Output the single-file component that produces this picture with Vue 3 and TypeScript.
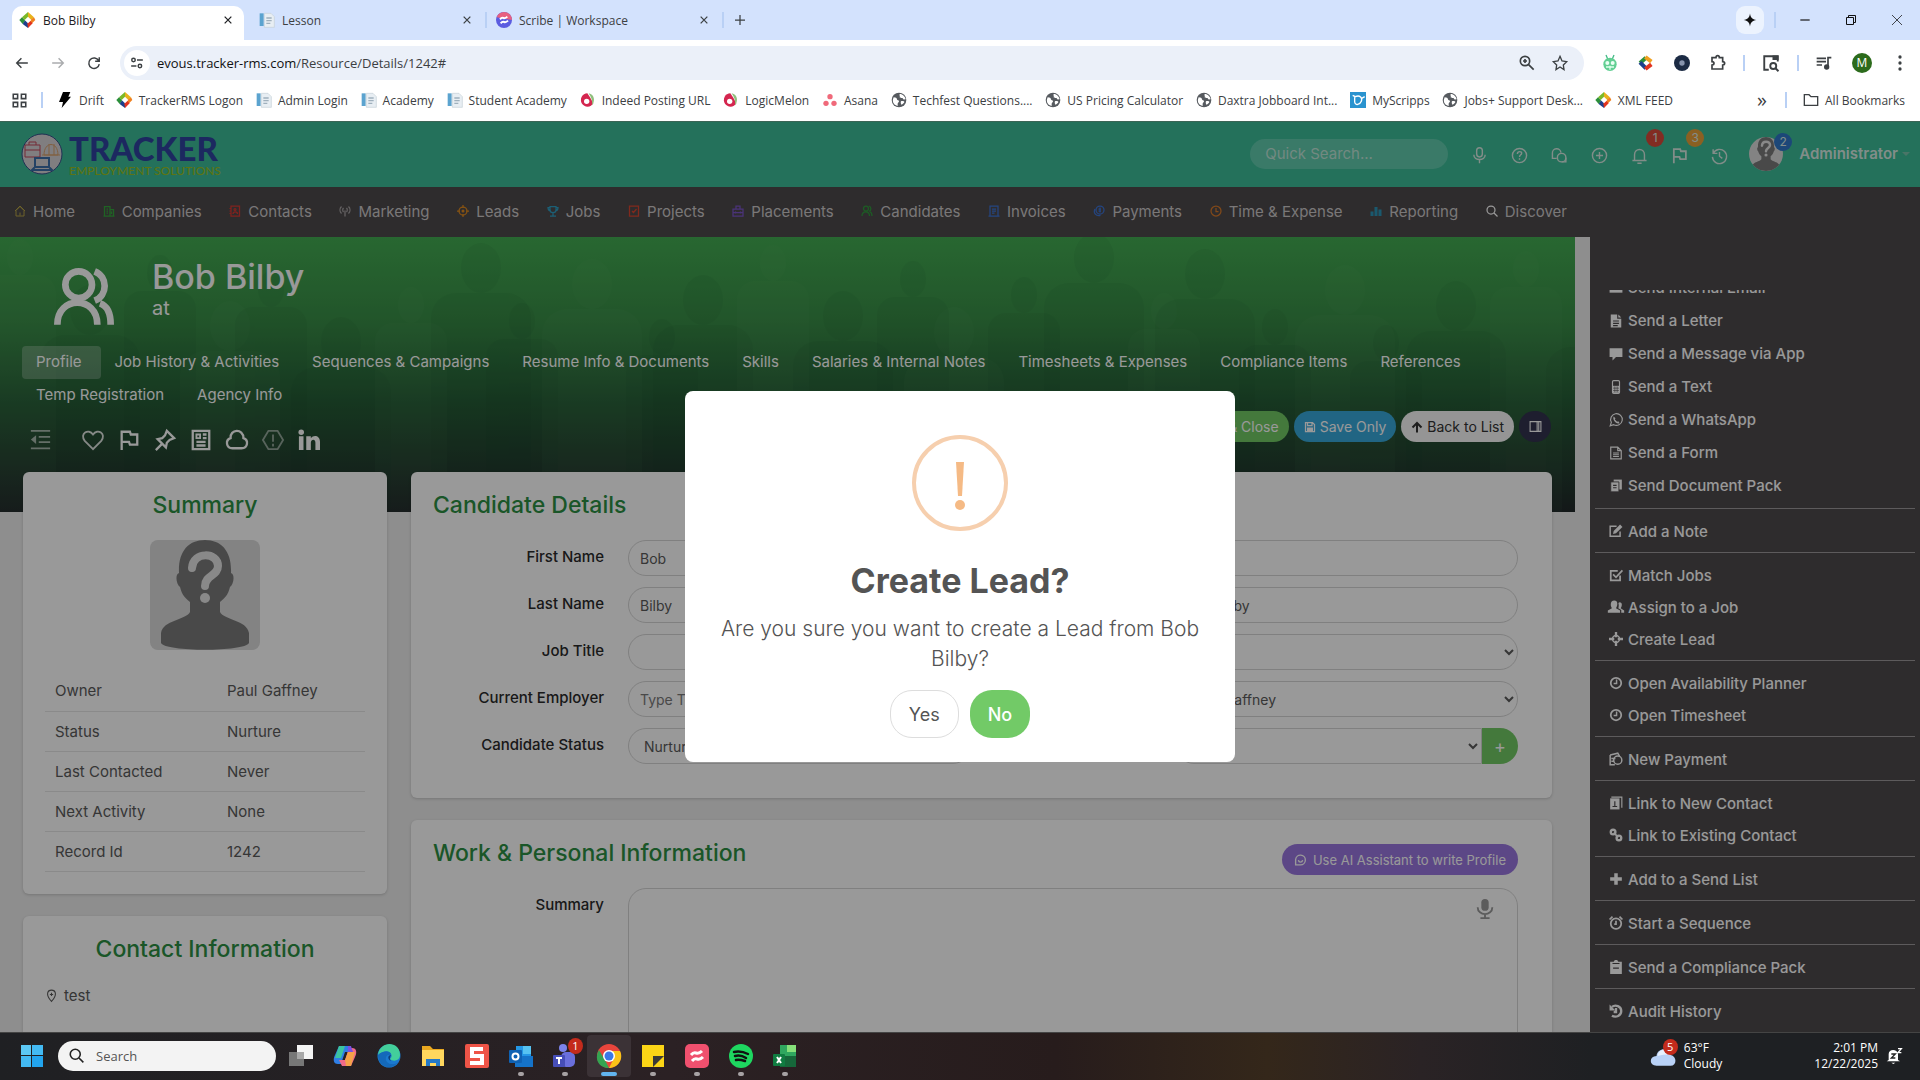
<script setup lang="ts">
import { h, ref } from 'vue'

const line = (w: number) => `fill="none" stroke="currentColor" stroke-width="${w}"`
const S = line(2)
const M = line(2.5)
const L = line(3)
const DIAMOND =
  '<path d="M12 0 3 8l5 5 4-4z" fill="#7cb928"/><path d="m12 0 9 8-5 5-4-4z" fill="#e8b21c"/><path d="M3 8-1 12l5 6 4-5z" fill="#2b8f3a"/><path d="m4 18 8 6 2-8-6-4z" fill="#1d3f8c"/><path d="m21 8 2 4-6 6-3-5z" fill="#f08020"/><path d="m12 24 7-7-4-4-4 4z" fill="#e2331f"/><path d="m12 7 5 5-5 5-5-5z" fill="#fff"/>'
const GLOBE =
  '<circle cx="12" cy="12" r="11" fill="#565a5f"/><path d="M4 8c3 0 5 1 5 3s3 1 3 3-2 2-2 4v3C5 20 2 16 3 11zM13 3c-1 2 1 3 0 5 2 2 4 0 5 2s3 1 4 1c-1-4-4-8-9-8zM15 14c2-1 5 0 5 1s-3 4-4 4-2-4-1-5z" fill="#fff"/>'
const PAGE =
  '<path d="M1 2h6v19H1z" fill="#5ba3cf"/><path d="M8 2h10l5 5v16H8z" fill="#e8eef3" stroke="#c5d0d8"/><path d="M11 9h8M11 13h8M11 17h6" stroke="#9fb0bd" stroke-width="2"/>'
const MELON =
  '<path d="M11 2a10 10 0 1 0 9 15L15 8z" fill="#d4264f"/><path d="M13 2c9 2 10 12 5 18 1-7-1-12-5-18z" fill="#8fbf7c"/><circle cx="10" cy="14" r="4" fill="#fff"/>'
const FLAG = `<path ${M} d="M4 23V3h9l1 3h7v11h-8l-1-3H4"/>`
const SAVE =
  '<path fill="none" stroke="currentColor" stroke-width="2.5" d="M3 3h14l4 4v14H3zM7 3v6h9V3"/><path fill="currentColor" d="M6 13h12v8H6z"/>'
const PEOPLE =
  'd="M2 22c0-11 15-11 15 0M16 2c5 2 5 9 0 11M18 14c3 1 4 4 4 8"'
const HEAD =
  '<path fill="#dadada" d="M0 0h110v110H0z"/><path fill="#7b7b7b" d="M55 0c17 0 27 12 26 33 4 1 3 11-1 14-2 8-5 11-10 15v10c4 8 27 8 29 21v10c-4 9-84 9-88 0V93c2-13 25-13 29-21V62c-5-4-8-7-10-15-4-3-5-13-1-14C28 12 38 0 55 0z"/><path fill="none" stroke="#e4e4e4" stroke-width="8" stroke-linecap="round" d="M42 28c1-17 26-16 26-2 0 10-13 9-13 20"/><circle cx="55" cy="58" r="5" fill="#e4e4e4"/>'

const glyphs: Record<string, string> = {
  diamond: DIAMOND,
  globe: GLOBE,
  page: PAGE,
  melon: MELON,
  flag: FLAG,
  save: SAVE,
  people: `<circle cx="10" cy="7" r="5" ${M}/><path ${M} ${PEOPLE}/>`,
  scribe: '<circle cx="12" cy="12" r="12" fill="#5b5ce0"/><path d="M12 0a12 12 0 0 1 12 12L1 8A12 12 0 0 1 12 0z" fill="#e8607f"/><path d="M6 11c5-6 5 2 11-4M7 17c5-6 5 2 11-4" fill="none" stroke="#fff" stroke-width="3"/>',
  close: `<path ${L} d="m4 4 16 16M20 4 4 20"/>`,
  thinClose: `<path ${line(1.5)} d="m2 2 20 20M22 2 2 22"/>`,
  plus: `<path ${M} d="M12 2v20M2 12h20"/>`,
  minus: `<path ${S} d="M4 12h16"/>`,
  restore: `<path ${S} d="M3 7h14v14H3zM7 7V3h14v14h-4"/>`,
  spark: '<path fill="currentColor" d="M12 1c1 7 4 10 11 11-7 1-10 4-11 11-1-7-4-10-11-11 7-1 10-4 11-11z"/>',
  back: `<path ${M} d="M22 12H3M11 4l-8 8 8 8"/>`,
  forward: `<path ${M} d="M2 12h19M13 4l8 8-8 8"/>`,
  reload: `<path ${M} d="M20 8a9 9 0 1 0 1 6M21 2v7h-7"/>`,
  tune: `<path ${M} d="M12 7h10M2 17h9"/><circle cx="6" cy="7" r="3" ${M}/><circle cx="17" cy="17" r="3" ${M}/>`,
  zoomIn: `<circle cx="9" cy="9" r="7" ${M}/><path ${M} d="m14 14 8 8M9 6v6M6 9h6"/>`,
  star: `<path ${S} d="m12 2 3 7 7 1-5 5 1 7-6-4-6 4 1-7-5-5 7-1z"/>`,
  bug: '<path d="m6 0 3 7M18 0l-3 7" stroke="#4b8" stroke-width="2"/><ellipse cx="12" cy="14" rx="10" ry="10" fill="#62cf93"/><circle cx="8" cy="12" r="3" fill="#eafff3"/><circle cx="16" cy="12" r="3" fill="#eafff3"/><path d="M6 18h12M12 16v6" stroke="#dfffee" stroke-width="2"/>',
  cring: '<path fill="none" stroke-width="6" stroke="#2b8f3a" d="m3 12 9-8"/><path fill="none" stroke-width="6" stroke="#f0a020" d="m11 3 9 7"/><path fill="none" stroke-width="6" stroke="#1d3f8c" d="m3 11 9 9"/><path fill="none" stroke-width="6" stroke="#e2331f" d="m11 21 9-7"/>',
  disc: '<circle cx="12" cy="12" r="12" fill="#1c2b44"/><circle cx="12" cy="12" r="4" fill="#8794ad"/>',
  puzzle: `<path ${M} d="M3 4h6c0-4 5-4 5 0h5v6c4 0 4 5 0 5v6H3v-6c4 0 4-5 0-5z"/>`,
  lens: `<path ${M} d="M9 21H3V3h18v7"/><path fill="currentColor" d="M14 2h8v6h-8z"/><circle cx="15" cy="16" r="4" ${M}/><path ${M} d="m18 19 4 4"/>`,
  queue: `<path ${M} d="M1 5h14M1 10h14M1 15h8M18 19V4h5"/><circle cx="16" cy="18" r="4" fill="currentColor"/>`,
  dots: '<circle cx="12" cy="3" r="2.5" fill="currentColor"/><circle cx="12" cy="12" r="2.5" fill="currentColor"/><circle cx="12" cy="21" r="2.5" fill="currentColor"/>',
  apps: `<path ${M} d="M2 2h7v7H2zM15 2h7v7h-7zM2 15h7v7H2zM15 15h7v7h-7z"/>`,
  drift: '<path d="M9 0h11l-3 7h4L7 24l2-9H3z"/>',
  asana: '<circle cx="12" cy="7" r="4" fill="#f0697a"/><circle cx="6" cy="17" r="4" fill="#f0697a"/><circle cx="18" cy="17" r="4" fill="#f0697a"/>',
  scripps: '<path d="M0 0h24v24H0z" fill="#2a93cf"/><path d="m4 5 4 2c7-3 11 2 9 7s-9 7-10 1V8M17 10l5-3" fill="none" stroke="#fff" stroke-width="2"/>',
  folder: `<path ${S} d="M2 4h7l3 3h10v13H2z"/>`,
  mic: `<rect x="8" y="1" width="8" height="13" rx="4" ${S}/><path ${S} d="M4 11c0 9 16 9 16 0M12 18v5"/>`,
  micSolid: '<rect x="8" y="1" width="8" height="13" rx="4" fill="currentColor"/><path fill="none" stroke="currentColor" stroke-width="2" d="M4 10c0 10 16 10 16 0M12 18v4M7 22h10"/>',
  help: `<circle cx="12" cy="12" r="10" ${S}/><path ${S} d="M9 10c0-5 7-4 6-1 0 2-3 2-3 5M12 16v2"/>`,
  chat: `<path ${S} d="M8 16H2V9a6 6 0 0 1 12-1"/><circle cx="15" cy="15" r="6" ${S}/><path ${S} d="M21 15v6h-6"/>`,
  plusCircle: `<circle cx="12" cy="12" r="10" ${S}/><path ${S} d="M12 7v10M7 12h10"/>`,
  bell: `<path ${S} d="M5 19v-8c0-10 14-10 14 0v8M2 19h20M9 23h6"/>`,
  history: `<path ${S} d="M3 3v6h6M3 9a10 10 0 1 1-1 5M12 7v6l4 3"/>`,
  home: `<path ${S} d="M4 22V11l8-8 8 8v11zM2 12 12 2l10 10M12 15v6"/>`,
  company: `<path ${M} d="M3 21V3h11v18M14 9h7v12M1 22h22M7 8h3M7 12h3M7 16h3M17 13v5"/>`,
  contact: `<path ${M} d="M4 2h17v20H4zM8 18c0-6 9-6 9 0"/><path ${S} d="M1 7h3M1 12h3M1 17h3"/><circle cx="12" cy="9" r="2" ${M}/>`,
  antenna: `<path ${M} d="M12 11v12M5 3C1 7 1 13 5 17M19 3c4 4 4 10 0 14M9 6c-2 2-2 6 0 8M15 6c2 2 2 6 0 8"/>`,
  target: `<circle cx="12" cy="12" r="8" ${M}/><circle cx="12" cy="12" r="3" fill="currentColor"/><path ${M} d="M12 0v6M12 18v6M0 12h6M18 12h6"/>`,
  trophy: `<path ${M} d="M6 3h12v7c0 7-12 7-12 0zM6 5H2c0 5 2 6 4 6M18 5h4c0 5-2 6-4 6M12 15v7M6 22h12"/>`,
  check: `<path ${M} d="M3 2h18v20H3zM8 12l3 3 6-7"/>`,
  brief: `<path ${M} d="M2 8h20v14H2zM8 8V2h8v6M2 15h20M7 13v4M17 13v4"/>`,
  invoice: `<path ${M} d="M4 2h16v20H4zM8 8h8M8 12h8M8 16h5M1 22h22"/>`,
  coin: `<circle cx="14" cy="10" r="8" ${M}/><path ${M} d="M4 8c-4 8 2 15 11 13M14 5v10M11 8h5M11 12h5"/>`,
  clock: `<circle cx="12" cy="12" r="10" ${M}/><path ${M} d="M12 6v7h5"/>`,
  bars: '<path fill="currentColor" d="M1 13h6v9H1zM9 4h6v18H9zM17 9h6v13h-6z"/>',
  search: `<circle cx="10" cy="10" r="8" ${M}/><path ${M} d="m16 16 7 7"/>`,
  outdent: '<path fill="none" stroke="currentColor" stroke-width="2" d="M1 2h22M10 9h13M10 15h13M1 22h22"/><path fill="currentColor" d="M7 7v10l-6-5z"/>',
  heart: `<path ${S} d="M12 22 3 13C-3 5 7-1 12 6c5-7 15-1 9 7z"/>`,
  pin: `<path ${M} d="m14 2 8 8-5 2-3 3-1 5-9-9 5-1 3-3zM9 16l-7 7"/>`,
  news: `<path ${M} d="M3 2h18v20H3zM7 14h10M7 18h10M14 6h4M14 10h4"/><path ${S} d="M7 6h4v4H7z"/>`,
  cloud: `<path ${M} d="M7 21C0 21-1 12 5 10 4 0 19-1 19 10c6 2 5 11-2 11z"/>`,
  hex: `<path ${S} d="M7 2h10l6 10-6 10H7L1 12zM12 6v8M12 16v3"/>`,
  linkedin: '<path fill="currentColor" d="M1 8h5v15H1zM9 8h5v2c3-4 10-3 10 4v9h-5v-8c0-5-5-4-5 0v8H9z"/><circle cx="3.500" cy="3.500" r="3" fill="currentColor"/>',
  up: '<path fill="none" stroke="currentColor" stroke-width="4" d="M12 23V4M3 13l9-9 9 9"/>',
  panel: `<path ${S} d="M2 3h20v18H2zM15 3v18M18 3v18"/>`,
  smile: `<path ${M} d="M3 22V12a9 9 0 1 1 9 10zM8 13c1 5 7 5 8 0"/>`,
  marker: `<path ${S} d="M12 23C0 10 5 2 12 2s12 8 0 21z"/><path ${S} d="M12 7v6M9 10h6"/>`,
  mail: '<path fill="currentColor" d="M1 4h22v16H1z"/>',
  fileSolid: '<path fill="currentColor" d="M3 1h11v7h7v15H3z"/><path fill="currentColor" d="m16 1 5 5h-5z"/><path stroke="#4e4a4c" stroke-width="2" d="M7 12h10M7 16h10M7 20h8"/>',
  bubble: '<path fill="currentColor" d="M1 2h22v15H12l-6 6v-6H1z"/>',
  phone: `<rect x="6" y="1" width="12" height="22" rx="2" ${S}/><path fill="currentColor" d="M6 10h12v12H6z"/><path stroke="#4e4a4c" d="M7 14h10M7 18h10M10 11v10M14 11v10"/>`,
  whatsapp: `<path ${S} d="m2 22 2-6a10 10 0 1 1 4 4z"/><path fill="currentColor" d="m8 6 3 3-1 2 4 4 2-1 2 3c-4 4-13-5-10-11z"/>`,
  file: `<path ${S} d="M3 2h12l6 6v14H3zM15 2v6h6M7 12h10M7 15h10M7 18h10"/>`,
  copies: '<path fill="currentColor" d="M8 1h14v17H8z"/><path fill="currentColor" stroke="#4e4a4c" stroke-width="1.500" d="M3 5h14v17H3z"/><path stroke="#4e4a4c" stroke-width="2" d="M7 11h6M7 15h6"/>',
  edit: `<path ${M} d="M19 13v8H2V4h11"/><path fill="currentColor" d="m8 12 11-11 4 4-11 11-5 1z"/>`,
  checkbox: `<path ${L} d="M19 13v8H3V5h12M7 11l5 5L23 4"/>`,
  users: '<path fill="currentColor" d="M9 1c7 0 6 9 3 13l7 4v4H-2v-4l7-4C2 10 2 1 9 1zM18 4c6 0 4 8 2 10l6 4v4h-5v-5l-5-3c1-3 1-7 0-9z"/>',
  cross: `<path ${line(4)} d="M12 0v9M12 15v9M0 12h9M15 12h9"/><circle cx="12" cy="12" r="6" ${M}/>`,
  timer: `<circle cx="12" cy="12" r="9" ${L}/><path ${M} d="M13 6v7H8"/>`,
  money: `<path ${M} d="M2 5 15 2l3 5M2 5v17h8M4 11h7M4 16h5"/><circle cx="15" cy="14" r="7" ${M}/>`,
  book: '<path fill="currentColor" d="M2 4h16v19H2z"/><path fill="none" stroke="currentColor" stroke-width="2" d="M4 2h18v18"/><path fill="none" stroke="#4e4a4c" stroke-width="2" d="M6 18h8M10 9v8"/>',
  link: `<circle cx="7" cy="7" r="4" ${line(4)}/><circle cx="17" cy="17" r="4" ${line(4)}/><path ${L} d="m8 8 8 8"/>`,
  bigPlus: `<path ${line(6)} d="M12 2v20M2 12h20"/>`,
  alarm: `<circle cx="12" cy="13" r="9" ${L}/><path ${L} d="M12 8v6H9M1 6l5-5M23 6l-5-5"/>`,
  clipboard: '<path fill="currentColor" d="M2 3h6l2-3h4l2 3h6v21H2z"/><path stroke="#4e4a4c" stroke-width="2" d="M6 6h12M7 14h10"/>',
  undo: `<path ${line(4)} d="M5 5c6-5 16-1 16 7s-9 12-16 8M12 7v7H8"/><path fill="currentColor" d="M1 1v10h10z"/>`,
  windows: '<path fill="#5cc8f5" d="M1 1h10v10H1z"/><path fill="#43baf3" d="M12 1h11v10H12zM1 12h10v11H1z"/><path fill="#22a4ee" d="M12 12h11v11H12z"/>',
  taskview: '<path fill="#f4f4f4" d="M8 1h16v14H8z"/><path fill="#777" d="M0 8h15v14H0z"/><path fill="#a8a8a8" d="M8 8h7v7H8z"/>',
  copilot: '<path d="M6 2h9l3 6h-6L8 20H5C0 20 0 15 2 11z" fill="#2f7fe6"/><path d="m6 2 6 0-4 12H2z" fill="#3bc4a0"/><path d="M18 22H9l-3-6h6l4-12h3c5 0 5 5 3 9z" fill="#f06a8a"/><path d="m12 16 3-8h7l-4 14h-5z" fill="#f4a24a"/><path d="M15 2h3l2 6h-5z" fill="#7a4fe0"/>',
  edge: '<circle cx="12" cy="12" r="11.500" fill="#1b79cf"/><path d="M1 11C3-4 23-3 23 11c0 6-7 7-10 4 5-4-2-12-12-4z" fill="#43cf9b"/><path d="M1 11c5-5 13-5 13 0-4-1-7 3-4 7 3 3 8 3 11 0-5 9-20 6-20-7z" fill="#1469ba"/><path d="M14 11c-3 0-4 4 0 6-2-2-1-4 0-6z" fill="#0e3f78"/>',
  explorer: '<path fill="#e9a820" d="M1 2h8l3 3h11v5H1z"/><path fill="#ffd75e" d="M1 6h22v16H1z"/><path fill="#2479c7" d="M5 15h14v7h-4v-3H9v3H5z"/>',
  snagit: '<rect width="24" height="24" rx="2" fill="#ee5447"/><path fill="none" stroke="#fff" stroke-width="4" d="M18 5H7v7h10v7H5"/>',
  outlook: '<path fill="#2497e6" d="M7 2h15v18H7z"/><path fill="#56c3f2" d="M14 2h8v8h-8z"/><path fill="#1573c9" d="M6 12h18v11H6z"/><rect y="6" width="13" height="13" rx="1" fill="#0f62b4"/><circle cx="6.500" cy="12.500" r="3" fill="none" stroke="#fff" stroke-width="2"/>',
  teams: '<circle cx="10" cy="4" r="4" fill="#7b83eb"/><rect x="8" y="8" width="14" height="15" rx="5" fill="#6a6fdc"/><rect y="11" width="12" height="12" rx="1" fill="#464eb8"/><path stroke="#fff" stroke-width="2" d="M3 14h6M6 14v6"/>',
  chrome: '<circle cx="12" cy="12" r="12" fill="#e8453c"/><path fill="#34a451" d="M2 6 9 18l3 6C1 24-3 14 2 6z"/><path fill="#fbc318" d="M12 7h11c4 8-2 17-11 17l5-10z"/><circle cx="12" cy="12" r="6" fill="#fff"/><circle cx="12" cy="12" r="4.500" fill="#3b78e7"/>',
  notes: '<path fill="#fbd516" d="M1 1h22v22H1z"/><path fill="#3a3a36" d="M12 23V12h11z"/>',
  scribeApp: '<rect width="24" height="24" rx="5" fill="#f0506e"/><path fill="none" stroke="#fff" stroke-width="3" d="M6 11c5-6 5 2 11-4M7 17c5-6 5 2 11-4"/>',
  spotify: '<circle cx="12" cy="12" r="12" fill="#1ed760"/><path fill="none" stroke="#111" stroke-width="2.500" stroke-linecap="round" d="M5 8c5-1 10 0 14 2M6 12c4-1 8 0 11 2M7 16c3-1 6 0 9 1"/>',
  excel: '<path fill="#2fa75f" d="M7 1h16v22H7z"/><path fill="#86e07a" d="M14 1h9v7h-9z"/><path fill="#16673a" d="M7 12h16v11H7z"/><rect y="10" width="12" height="12" rx="1" fill="#107c41"/><path stroke="#fff" stroke-width="2" d="m4 13 4 6M8 13l-4 6"/>',
  weather: '<path fill="#b9d2f7" d="M6 21c-7 0-7-9 0-9 1-8 12-8 13-1 6 1 6 10 0 10z"/><path fill="#e7f0fd" d="M7 12c1-7 9-8 12-1-5-1-8 0-12 1z"/>',
  bellZ: '<path fill="#fff" d="M4 18V9c0-8 13-8 14 0v9l3 2H1zM8 22h6l-3 2z"/><path fill="none" stroke="#222" stroke-width="2" d="M8 9h6l-6 6h6"/><path fill="none" stroke="#fff" stroke-width="2" d="M18 1h5l-5 6h5"/>',
}

const Icon = (props: { name: string; size?: number }) =>
  h('svg', {
    viewBox: '0 0 24 24',
    width: props.size ?? 16,
    height: props.size ?? 16,
    'aria-hidden': 'true',
    style: { flex: 'none', overflow: 'visible' },
    innerHTML: glyphs[props.name],
  })
Icon.props = ['name', 'size']

const bookmarks = [
  ['drift', 'Drift'], ['diamond', 'TrackerRMS Logon'], ['page', 'Admin Login'], ['page', 'Academy'],
  ['page', 'Student Academy'], ['melon', 'Indeed Posting URL'], ['melon', 'LogicMelon'], ['asana', 'Asana'],
  ['globe', 'Techfest Questions....'], ['globe', 'US Pricing Calculator'], ['globe', 'Daxtra Jobboard Int...'],
  ['scripps', 'MyScripps'], ['globe', 'Jobs+ Support Desk...'], ['diamond', 'XML FEED'],
]

const menu = [
  ['home', 'Home', '#b5a347'], ['company', 'Companies', '#35a53c'], ['contact', 'Contacts', '#d63a32'],
  ['antenna', 'Marketing', '#a9a5a6'], ['target', 'Leads', '#e08a1e'], ['trophy', 'Jobs', '#2f9fc4'],
  ['check', 'Projects', '#d8452f'], ['brief', 'Placements', '#7c55c9'], ['people', 'Candidates', '#2f9a3c'],
  ['invoice', 'Invoices', '#3d74d6'], ['coin', 'Payments', '#3d74d6'], ['clock', 'Time & Expense', '#d87a2a'],
  ['bars', 'Reporting', '#2c95b8'], ['search', 'Discover', '#ffffff'],
]

const tools: { icon: string; label: string; badge?: string; tone?: string }[] = [
  { icon: 'mic', label: 'Dictate' }, { icon: 'help', label: 'Help' }, { icon: 'chat', label: 'Chat' },
  { icon: 'plusCircle', label: 'Add' }, { icon: 'bell', label: 'Alerts', badge: '1', tone: 'red' },
  { icon: 'flag', label: 'Flags', badge: '3', tone: 'amber' }, { icon: 'history', label: 'Recent' },
]

const tabs = [
  'Profile', 'Job History & Activities', 'Sequences & Campaigns', 'Resume Info & Documents', 'Skills',
  'Salaries & Internal Notes', 'Timesheets & Expenses', 'Compliance Items', 'References', 'Temp Registration', 'Agency Info',
]
const marks = ['heart', 'flag', 'pin', 'news', 'cloud', 'hex', 'linkedin']

const summary = [
  ['Owner', 'Paul Gaffney'], ['Status', 'Nurture'], ['Last Contacted', 'Never'], ['Next Activity', 'None'], ['Record Id', '1242'],
]

const actions = [
  [['mail', 'Send Internal Email'], ['fileSolid', 'Send a Letter'], ['bubble', 'Send a Message via App'], ['phone', 'Send a Text'],
    ['whatsapp', 'Send a WhatsApp'], ['file', 'Send a Form'], ['copies', 'Send Document Pack']],
  [['edit', 'Add a Note']],
  [['checkbox', 'Match Jobs'], ['users', 'Assign to a Job'], ['cross', 'Create Lead']],
  [['timer', 'Open Availability Planner'], ['timer', 'Open Timesheet']],
  [['money', 'New Payment']],
  [['book', 'Link to New Contact'], ['link', 'Link to Existing Contact']],
  [['bigPlus', 'Add to a Send List']],
  [['alarm', 'Start a Sequence']],
  [['clipboard', 'Send a Compliance Pack']],
  [['undo', 'Audit History']],
]

const apps: { icon: string; state?: string; badge?: string }[] = [
  { icon: 'taskview' }, { icon: 'copilot' }, { icon: 'edge' }, { icon: 'explorer' }, { icon: 'snagit' },
  { icon: 'outlook', state: 'open' }, { icon: 'teams', state: 'open', badge: '1' }, { icon: 'chrome', state: 'current' },
  { icon: 'notes', state: 'open' }, { icon: 'scribeApp', state: 'open' }, { icon: 'spotify', state: 'open' }, { icon: 'excel', state: 'open' },
]

// Silhouettes of the crowd behind the record banner
const crowd = Array.from({ length: 26 }, (_, i) => ({
  x: 20 + i * 62 + ((i * 37) % 29),
  y: 20 + ((i * 53) % 90),
  r: 18 + ((i * 7) % 14),
}))

const firstName = ref('Bob')
const lastName = ref('Bilby')
const knownAs = ref('Bob Bilby')
</script>

<template>
  <div class="desktop">
    <header class="chrome">
      <div class="strip">
        <div class="tab active"><Icon name="diamond" /><span>Bob Bilby</span><button aria-label="Close tab"><Icon name="close" :size="10" /></button></div>
        <div class="tab"><Icon name="page" /><span>Lesson</span><button aria-label="Close tab"><Icon name="close" :size="10" /></button></div>
        <i class="bar"></i>
        <div class="tab"><Icon name="scribe" /><span>Scribe | Workspace</span><button aria-label="Close tab"><Icon name="close" :size="10" /></button></div>
        <i class="bar"></i>
        <button class="new" aria-label="New tab"><Icon name="plus" :size="12" /></button>
        <div class="window">
          <button class="spark" aria-label="Assistant"><Icon name="spark" :size="14" /></button>
          <i class="bar"></i>
          <button aria-label="Minimize"><Icon name="minus" :size="14" /></button>
          <button aria-label="Restore"><Icon name="restore" :size="12" /></button>
          <button aria-label="Close"><Icon name="thinClose" :size="12" /></button>
        </div>
      </div>
      <div class="toolbar">
        <button aria-label="Back"><Icon name="back" :size="14" /></button>
        <button class="off" aria-label="Forward"><Icon name="forward" :size="14" /></button>
        <button aria-label="Reload"><Icon name="reload" :size="14" /></button>
        <div class="omnibox">
          <span class="tune"><Icon name="tune" :size="14" /></span>
          <span class="url"><b>evous.tracker-rms.com</b>/Resource/Details/1242#</span>
          <Icon name="zoomIn" /><Icon name="star" />
        </div>
        <div class="extensions">
          <Icon name="bug" /><Icon name="cring" /><Icon name="disc" /><Icon name="puzzle" />
          <i class="bar"></i><Icon name="lens" :size="18" /><i class="bar"></i><Icon name="queue" />
          <span class="me">M</span><Icon name="dots" />
        </div>
      </div>
      <nav class="bookmarks">
        <Icon name="apps" :size="15" /><i class="bar"></i>
        <div class="links"><a v-for="b in bookmarks" :key="b[1]" href="#"><Icon :name="b[0]" />{{ b[1] }}</a></div>
        <span class="more">»</span><i class="bar"></i>
        <a href="#"><Icon name="folder" />All Bookmarks</a>
      </nav>
    </header>

    <div class="page">
      <header class="brandbar">
        <svg class="emblem" viewBox="0 0 42 42" width="42" height="42" aria-hidden="true">
          <circle cx="21" cy="21" r="20" fill="#d6d2d6" stroke="#35508a" />
          <path d="M4 12h15v12H4zM8 12V9h7v3M4 17h15" fill="none" stroke="#c2485a" stroke-width="1" />
          <path d="M23 22c0-14 14-14 14 0zM28 22V11M33 22V11M21 22h18" fill="none" stroke="#d7a06c" stroke-width="1" />
          <path d="M14 25h14v9H14zM11 37h20l-3-3H14z" fill="none" stroke="#3d6fa8" stroke-width="2" />
        </svg>
        <div class="wordmark"><strong>TRACKER</strong><small>EMPLOYMENT SOLUTIONS</small></div>
        <input class="quick" type="search" placeholder="Quick Search..." aria-label="Quick Search" />
        <div class="tools">
          <button v-for="t in tools" :key="t.label" :aria-label="t.label">
            <Icon :name="t.icon" :size="17" /><em v-if="t.badge" :class="t.tone">{{ t.badge }}</em>
          </button>
        </div>
        <span class="avatar"><svg viewBox="0 0 110 110" width="34" height="34" aria-hidden="true" v-html="HEAD"></svg><em class="blue">2</em></span>
        <a class="admin" href="#">Administrator<i></i></a>
      </header>

      <nav class="menu">
        <a v-for="m in menu" :key="m[1]" href="#"><Icon :name="m[0]" :size="12" :style="{ color: m[2] }" />{{ m[1] }}</a>
      </nav>

      <div class="body">
        <main>
          <section class="hero">
            <svg class="crowd" viewBox="0 0 1575 275" preserveAspectRatio="xMidYMid slice" aria-hidden="true">
              <g v-for="(p, i) in crowd" :key="i" :fill="i % 3 ? '#0b3a22' : '#8fd08f'" :opacity="i % 3 ? 0.06 : 0.04">
                <ellipse :cx="p.x" :cy="p.y" :rx="p.r - 5" :ry="p.r" />
                <rect :x="p.x - p.r * 2" :y="p.y + p.r" :width="p.r * 4" height="240" :rx="p.r" />
              </g>
            </svg>
            <div class="who">
              <Icon name="people" :size="64" />
              <div><h1>Bob Bilby</h1><p>at</p></div>
            </div>
            <nav class="sections"><a v-for="(t, i) in tabs" :key="t" href="#" :class="{ on: i === 0 }">{{ t }}</a></nav>
            <div class="tasks">
              <div class="marks">
                <Icon class="outdent" name="outdent" :size="21" />
                <Icon v-for="m in marks" :key="m" :name="m" :class="m" :size="22" />
              </div>
              <div class="buttons">
                <button class="green"><Icon name="save" :size="12" />Save &amp; Close</button>
                <button class="cyan"><Icon name="save" :size="12" />Save Only</button>
                <button class="white"><Icon name="up" :size="12" />Back to List</button>
                <button class="dark" aria-label="Toggle panel"><Icon name="panel" :size="13" /></button>
              </div>
            </div>
          </section>

          <div class="columns">
            <div class="side">
              <section class="card">
                <h2>Summary</h2>
                <svg class="photo" viewBox="0 0 110 110" aria-hidden="true" v-html="HEAD"></svg>
                <table><tbody><tr v-for="r in summary" :key="r[0]"><th scope="row">{{ r[0] }}</th><td>{{ r[1] }}</td></tr></tbody></table>
              </section>
              <section class="card contact">
                <h2>Contact Information</h2>
                <p><Icon name="marker" :size="13" />test</p>
              </section>
            </div>
            <div class="wide">
              <section class="card">
                <h2>Candidate Details</h2>
                <form class="fields" @submit.prevent>
                  <label for="first">First Name</label><input id="first" v-model="firstName" />
                  <input class="second" aria-label="Middle Name" />
                  <label for="last">Last Name</label><input id="last" v-model="lastName" />
                  <input class="second" v-model="knownAs" aria-label="Known As" />
                  <label for="title">Job Title</label><input id="title" />
                  <select class="second" aria-label="Type"><option></option></select>
                  <label for="employer">Current Employer</label><input id="employer" placeholder="Type To Search" />
                  <select class="second" aria-label="Owner"><option>Paul Gaffney</option></select>
                  <label for="status">Candidate Status</label><select id="status"><option>Nurture</option></select>
                  <div class="second joined"><select aria-label="Source"><option></option></select><button aria-label="Add">+</button></div>
                </form>
              </section>
              <section class="card">
                <div class="title"><h2>Work &amp; Personal Information</h2><button class="ai"><Icon name="smile" :size="13" />Use AI Assistant to write Profile</button></div>
                <div class="write">
                  <label for="summary">Summary</label>
                  <div class="area"><textarea id="summary"></textarea><Icon class="voice" name="micSolid" :size="22" /></div>
                </div>
              </section>
            </div>
          </div>
        </main>

        <aside>
          <div class="scroll">
            <ul v-for="(g, i) in actions" :key="i" :class="{ roomy: i === 0 }">
              <li v-for="a in g" :key="a[1]"><a href="#"><Icon :name="a[0]" :size="14" />{{ a[1] }}</a></li>
            </ul>
          </div>
        </aside>
      </div>

      <div class="overlay">
        <div class="dialog" role="alertdialog" aria-labelledby="ask">
          <svg viewBox="0 0 96 96" width="96" height="96" aria-hidden="true">
            <circle cx="48" cy="48" r="46" fill="none" stroke="#f6cfae" stroke-width="4" />
            <path d="M44 27h8l-2 34h-4z" fill="#f5ba85" /><circle cx="48" cy="70" r="5" fill="#f5ba85" />
          </svg>
          <h2 id="ask">Create Lead?</h2>
          <p>Are you sure you want to create a Lead from Bob Bilby?</p>
          <div><button class="yes">Yes</button><button class="no">No</button></div>
        </div>
      </div>
    </div>

    <footer class="taskbar">
      <button class="start" aria-label="Start"><Icon name="windows" :size="24" /></button>
      <label class="find"><Icon name="search" :size="15" /><input placeholder="Search" aria-label="Search" /></label>
      <div class="apps">
        <button v-for="a in apps" :key="a.icon" :class="a.state" :aria-label="a.icon"><Icon :name="a.icon" :size="24" /><em v-if="a.badge">{{ a.badge }}</em></button>
      </div>
      <div class="weather"><span><Icon name="weather" :size="26" /><em>5</em></span><p>63°F<br />Cloudy</p></div>
      <p class="when">2:01 PM<br />12/22/2025</p>
      <Icon name="bellZ" :size="16" />
    </footer>
  </div>
</template>

<style>
body { margin: 0; overflow: hidden; }
</style>

<style scoped>
* { box-sizing: border-box; }
h1, h2, p, ul { margin: 0; padding: 0; font-weight: 500; }
a { color: inherit; text-decoration: none; }
button { border: 0; padding: 0; background: none; color: inherit; font: inherit; }
input, select, textarea { font: inherit; color: inherit; border: 0; min-width: 0; outline: 0; }
em { font-style: normal; }
.desktop { display: flex; flex-direction: column; height: 100vh; font: 12px "Open Sans", sans-serif; color: #3c4043; }
.bar { width: 2px; height: 16px; background: #b9d0f5; flex: none; }

.strip { display: flex; align-items: center; height: 40px; padding-left: 12px; background: #d3e2fd; }
.tab { display: flex; align-items: center; gap: 7px; width: 235px; height: 40px; padding: 0 13px 0 9px; }
.tab span { flex: 1; }
.tab button { display: flex; }
.tab.active { width: 232px; height: 34px; margin: 6px 6px 0 0; padding: 0 11px 6px 8px; background: #fff; border-radius: 10px 10px 0 0; color: #1f2023; }
.new { display: flex; padding: 10px; }
.window { display: flex; align-items: center; margin-left: auto; padding-right: 16px; }
.window button { width: 46px; display: grid; place-items: center; color: #111; }
.window button:last-child { width: 14px; margin-left: 16px; }
.window .spark { width: 28px; height: 28px; border-radius: 9px; background: #ecf3fe; margin-right: 10px; }
.spark + .bar { margin-right: 6px; }

.toolbar { display: flex; align-items: center; height: 46px; padding: 0 14px; background: #fff; }
.toolbar > button { width: 36px; display: flex; }
.toolbar > button:first-child { margin-left: 1px; }
.off { color: #aaacae; }
.omnibox { flex: 1; display: flex; align-items: center; gap: 17px; height: 34px; margin-left: -3px; padding: 0 16px 0 4px; border-radius: 17px; background: #ebf0f9; }
.tune { display: grid; place-items: center; width: 26px; height: 26px; border-radius: 50%; background: #fff; }
.url { flex: 1; margin-left: -10px; font-size: 13px; }
.url b { font-weight: 400; color: #111; }
.extensions { display: flex; align-items: center; gap: 20px; padding-left: 18px; margin-right: -2px; }
.extensions .bar { margin: 0 -3px; }
.me { width: 20px; height: 20px; border-radius: 50%; background: #2c6b1c; color: #fff; text-align: center; line-height: 20px; }

.bookmarks { display: flex; align-items: center; height: 35px; padding: 0 15px 7px 12px; background: #fff; }
.bookmarks > .bar:nth-child(2) { margin: 0 14px; }
.links { flex: 1; display: flex; justify-content: space-between; margin-right: 84px; }
.bookmarks a { display: flex; align-items: center; gap: 6px; white-space: nowrap; }
.more { font-size: 20px; line-height: 20px; margin-right: 18px; }
.more + .bar { margin-right: 16px; }

.page { position: relative; flex: 1; min-height: 0; display: flex; flex-direction: column; overflow: hidden; font: 15px Inter, sans-serif; color: #5a5a5a; }
.brandbar { display: flex; align-items: center; height: 66px; flex: none; padding: 0 10px 2px 21px; background: #3cbd98; border-top: 1px solid #63a890; color: #d9ebe4; }
.wordmark { display: flex; flex-direction: column; margin-left: 6px; font-family: Lato, sans-serif; }
.wordmark strong { font-size: 33px; line-height: 34px; font-weight: 900; color: #2f44a0; }
.wordmark small { font-size: 12px; line-height: 12px; font-weight: 500; color: #9cc220; }
.quick { margin-left: auto; width: 198px; height: 30px; padding: 0 15px; border-radius: 15px; background: #62cbae; }
.quick::placeholder { color: #bfe5d8; }
.tools { display: flex; gap: 23px; padding: 4px 21px 0 23px; }
.tools button { position: relative; display: flex; }
.brandbar em { position: absolute; width: 18px; height: 18px; border-radius: 50%; text-align: center; font-size: 12px; line-height: 18px; }
.tools em { left: 15px; top: -18px; }
.red { background: #d94a3a; }
.amber { background: #e8a13a; }
.blue { background: #2f77c9; right: -9px; top: -4px; }
.avatar { position: relative; display: flex; }
.avatar svg { border-radius: 50%; }
.admin { display: flex; align-items: center; gap: 4px; margin-left: 16px; font-weight: 600; }
.admin i { border: 4px solid transparent; border-top-color: #7cc4ac; border-bottom: 0; }

.menu { display: flex; align-items: center; justify-content: space-between; flex: none; height: 50px; padding: 0 353px 2px 14px; background: #4e4a4c; color: #cbc8c9; }
.menu a { display: flex; align-items: center; gap: 7px; white-space: nowrap; }

.body { flex: 1; min-height: 0; display: flex; background: #ededed; }
main { flex: 1; min-width: 0; overflow: hidden; }
.hero { position: relative; height: 275px; margin-right: 15px; padding: 12px 24px 0 22px; background: linear-gradient(#43ac52, #398e47 30%, #275f38 60%, #22282a); color: #fff; }
.hero > * { position: relative; }
.hero > .crowd { position: absolute; inset: 0; width: 100%; height: 100%; }
.who { display: flex; align-items: center; gap: 36px; height: 97px; padding-left: 30px; }
.who div { margin-top: -20px; }
.who h1 { font-size: 34px; line-height: 40px; }
.who p { font-size: 20px; line-height: 22px; font-weight: 400; }
.sections { display: flex; flex-wrap: wrap; }
.sections a { height: 33px; padding: 0 19px 0 14px; line-height: 31px; }
.sections .on { border-radius: 4px; background: rgba(255, 255, 255, .24); }
.tasks { display: flex; justify-content: space-between; height: 61px; margin-top: -1px; }
.marks { display: flex; align-items: center; gap: 14px; height: 57px; padding-left: 8px; }
.outdent { opacity: .6; margin-right: 17px; }
.heart { opacity: .85; }
.hex { opacity: .5; }
.buttons { display: flex; gap: 5px; font-size: 14px; }
.buttons button { display: flex; align-items: center; gap: 4px; height: 31px; padding: 0 10px; border-radius: 16px; }
.green { background: #72ca64; }
.cyan { background: #38a9db; }
.buttons .white { background: #f8f8f8; color: #333; }
.buttons .dark { width: 32px; justify-content: center; background: #32324f; }

.columns { position: relative; display: flex; align-items: flex-start; gap: 24px; margin-top: -40px; padding: 0 38px 0 23px; }
.side { width: 364px; flex: none; }
.wide { flex: 1; min-width: 0; }
.card { margin-bottom: 22px; padding: 14px 22px 22px; border-radius: 6px; background: #fff; box-shadow: 0 1px 3px rgba(0, 0, 0, .18); }
.card h2 { font-size: 23px; line-height: 39px; color: #2c8f43; }
.side h2 { text-align: center; }
.photo { display: block; width: 110px; height: 110px; margin: 15px auto 21px; border-radius: 8px; }
table { width: 100%; border-collapse: collapse; }
tr { height: 40px; border-bottom: 1px solid #e6e6e6; }
th { width: 172px; padding: 0 10px; text-align: left; font-weight: 400; }
td { padding: 0 10px; }
.contact { height: 240px; }
.contact p { display: flex; align-items: center; gap: 6px; margin-top: 17px; font-weight: 400; line-height: 20px; }
.wide .card { padding-right: 34px; }
.fields { display: grid; grid-template-columns: 171px 1fr 157px 1fr; gap: 11px 24px; padding: 15px 0 12px; font-size: 14px; }
.fields input, .fields select { width: 100%; height: 36px; padding: 0 11px; border: 1px solid #d6d6d6; border-radius: 18px; background: #fff; }
.fields input::placeholder { color: #7a7a7a; }
label { text-align: right; line-height: 34px; color: #2a2a2a; font-size: 15px; font-weight: 500; }
.second { grid-column: 4; }
.joined { display: flex; }
.joined select { border-radius: 18px 0 0 18px; }
.joined button { width: 36px; flex: none; border-radius: 0 18px 18px 0; background: #72ca64; color: #fff; font-size: 18px; }
.title { display: flex; justify-content: space-between; }
.ai { display: flex; align-items: center; gap: 6px; height: 31px; margin-top: 10px; padding: 0 12px; border-radius: 16px; background: #9a77e0; color: #fff; font-size: 13px; }
.write { display: grid; grid-template-columns: 171px 1fr; gap: 24px; padding-top: 13px; }
.area { position: relative; }
textarea { display: block; width: 100%; height: 220px; border: 1px solid #d6d6d6; border-radius: 18px; resize: none; }
.voice { position: absolute; right: 22px; top: 10px; color: #999; }

aside { width: 330px; padding: 53px 5px 0; background: #4e4a4c; color: #fff; }
.scroll { height: 100%; overflow: hidden; display: flex; flex-direction: column; }
ul { list-style: none; padding: 0 0 5px 14px; margin-bottom: 6px; border-bottom: 1px solid #9b989a; flex: none; }
ul:last-child { border: 0; }
ul.roomy { margin-top: -19px; padding-bottom: 6px; }
li { height: 32px; }
.roomy li { height: 33px; }
li a { display: flex; align-items: center; gap: 5px; height: 100%; }

.overlay { position: absolute; inset: 0; display: flex; align-items: center; justify-content: center; background: rgba(0, 0, 0, .4); }
.dialog { width: 550px; padding: 44px 20px 24px; border-radius: 8px; background: #fff; text-align: center; color: #545454; }
.dialog svg { display: block; margin: 0 auto 26px; }
.dialog h2 { font-size: 34px; line-height: 48px; font-weight: 700; }
.dialog p { margin: 9px 0 16px; font-size: 21px; line-height: 30px; font-weight: 300; }
.dialog div { display: flex; justify-content: center; gap: 11px; }
.dialog button { height: 48px; padding: 0 18px; border-radius: 22px; font-size: 18px; }
.yes { border: 1px solid #ddd; }
.no { background: #72ca67; color: #fff; font-weight: 500; }

.taskbar { display: flex; align-items: center; height: 48px; flex: none; padding: 0 18px 2px 20px; border-top: 1px solid #444; background: linear-gradient(90deg, #1f2023, #2b2124 35%, #271c1c 55%, #34271a 66%, #2a2325 74%, #1e2023 83%); color: #fff; }
.start { display: flex; }
.find { display: flex; align-items: center; gap: 10px; width: 218px; height: 30px; margin-left: 14px; padding: 0 11px; border-radius: 15px; background: #f3f3f3; color: #222; }
.find input { flex: 1; background: none; font-size: 13px; }
.find input::placeholder { color: #555; }
.apps { display: flex; align-items: center; margin: 0 auto 0 3px; }
.apps button { position: relative; display: grid; place-items: center; width: 44px; height: 42px; border-radius: 4px; }
.apps button.current { background: #3b3236; }
.open::after, .current::after { content: ""; position: absolute; bottom: 1px; width: 6px; height: 4px; border-radius: 2px; background: #a7a2a4; }
.current::after { width: 16px; background: #62b5f0; }
.taskbar em { position: absolute; width: 15px; height: 16px; border-radius: 50%; background: #c42b1c; text-align: center; line-height: 16px; font-size: 11px; }
.apps em { right: 4px; top: 3px; }
.weather { display: flex; align-items: center; gap: 8px; }
.weather span { position: relative; display: flex; }
.weather em { right: -2px; top: -4px; }
.taskbar p { font-size: 12px; line-height: 16px; }
.when { margin: 0 8px 0 92px; text-align: right; }
</style>
